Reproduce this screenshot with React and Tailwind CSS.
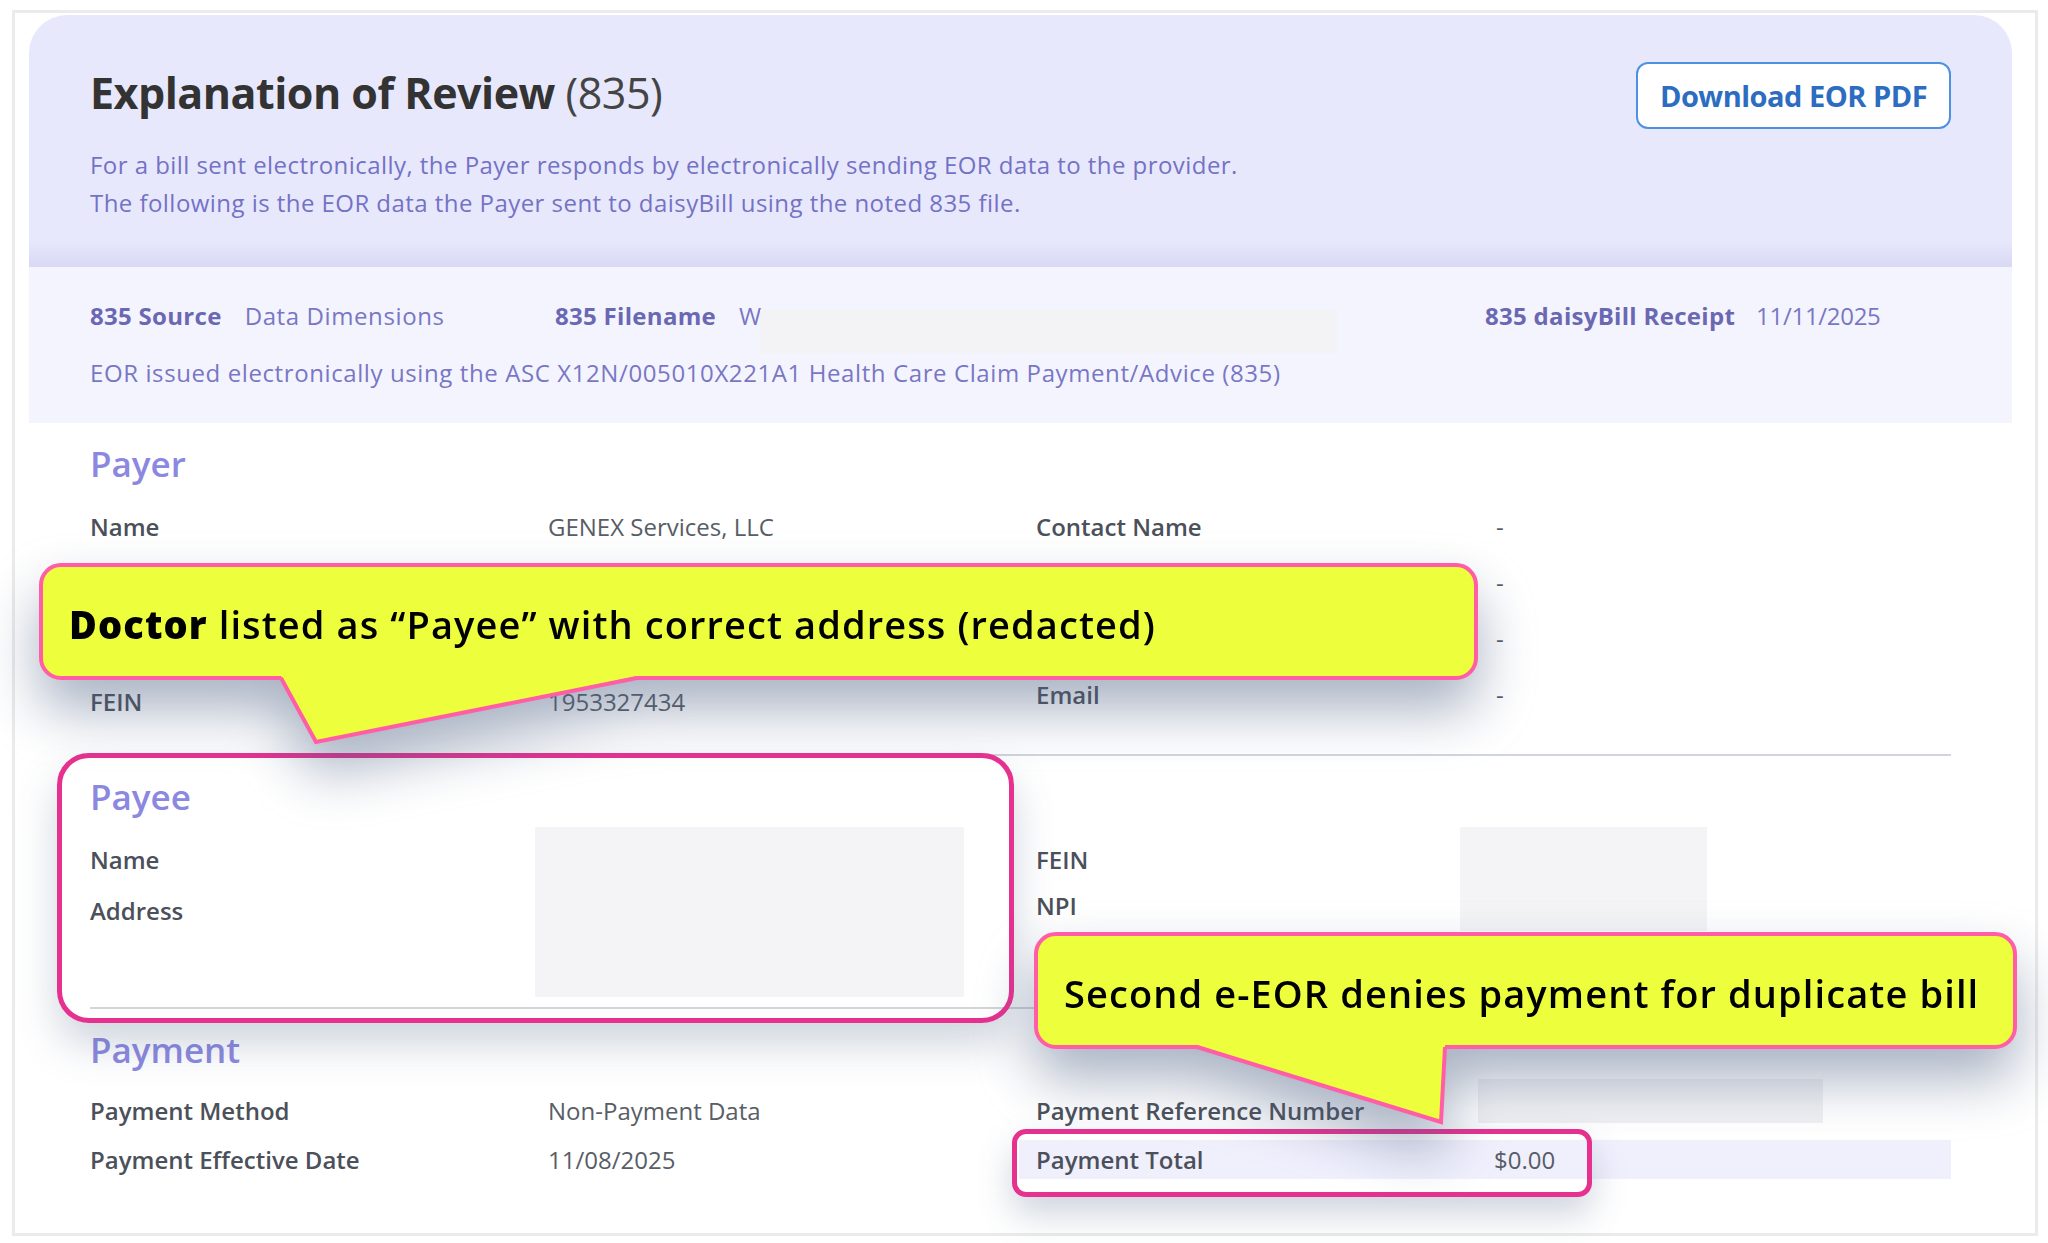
import React from 'react';

function Row({ cols, h, label, value, className = '' }) {
  return (
    <div className={`grid ${cols} ${h} ${className}`}>
      <span className="font-semibold text-[#4b505a]">{label}</span>
      <span className="text-[#585d66]">{value}</span>
    </div>
  );
}

function Callout({ pos, base, tail, children }) {
  // tail: [x1, x2, tipX, tipY] in local coords, measured from the box bottom
  const [x1, x2, tx, ty] = tail;
  return (
    <div className={`absolute ${pos} drop-shadow-[0_30px_28px_rgba(75,95,130,0.48)]`}>
      <div className="relative h-[117px] rounded-[22px] border-4 border-[#ff5ea6] bg-[#edff3c] flex items-center pl-[26px] pt-[6px] text-[38px] tracking-[1.1px] text-black">
        {children}
      </div>
      <svg className="absolute left-0 top-[113px]" width={base} height={ty + 6} viewBox={`0 0 ${base} ${ty + 6}`}>
        <polygon points={`${x1},0 ${tx},${ty} ${x2},0`} fill="#edff3c" />
        <polyline points={`${x1},2 ${tx},${ty} ${x2},2`} fill="none" stroke="#ff5ea6" strokeWidth="4" strokeLinejoin="miter" />
      </svg>
    </div>
  );
}

export default function App() {
  const L = 'grid-cols-[458px_1fr]';
  const R = 'grid-cols-[460px_1fr]';

  return (
    <div className="relative w-[2048px] h-[1243px] bg-white overflow-hidden font-['Open_Sans',Lato,sans-serif]">
      <div className="ml-[12px] mt-[10px] w-[2026px] h-[1226px] border-[3px] border-[#ebebeb] pl-[14px] pt-[2px]">
        <div className="w-[1983px]">
          {/* header */}
          <div className="h-[252px] rounded-t-[38px] bg-[linear-gradient(180deg,#e8e8fd_0%,#e8e8fd_89%,#d8d8f3_100%)] px-[61px] pt-[47px] flex justify-between items-start">
            <div className="pt-[5px]">
              <h1 className="text-[43px] leading-[52px] text-[#333333] tracking-[-0.5px]">
                <span className="font-bold">Explanation of Review</span>{' '}
                <span className="text-[#444444]">(835)</span>
              </h1>
              <p className="mt-[27px] text-[24px] leading-[38px] tracking-[0.45px] text-[#7472c4]">
                For a bill sent electronically, the Payer responds by electronically sending EOR data to the provider.
                <br />
                The following is the EOR data the Payer sent to daisyBill using the noted 835 file.
              </p>
            </div>
            <button className="w-[315px] h-[67px] rounded-[12px] border-2 border-[#4d91e3] bg-white text-[29px] font-bold text-[#2d6dc1] tracking-[-0.5px]">
              Download EOR PDF
            </button>
          </div>

          {/* 835 strip */}
          <div className="h-[156px] bg-[#f4f4fe] px-[61px] pt-[31px] text-[24px] leading-[36px] tracking-[0.6px] text-[#7977c4]">
            <div className="flex">
              <div className="w-[465px] flex gap-[23px]">
                <span className="font-bold text-[#6a68b3] tracking-[0.3px]">835 Source</span>
                <span>Data Dimensions</span>
              </div>
              <div className="w-[930px] flex gap-[23px]">
                <span className="font-bold text-[#6a68b3] tracking-[0.3px]">835 Filename</span>
                <span className="relative">
                  W
                  <span className="absolute left-[21px] top-[12px] w-[577px] h-[43px] bg-[#f3f3f5]" />
                </span>
              </div>
              <div className="flex gap-[21px]">
                <span className="font-bold text-[#6a68b3] tracking-[0.3px]">835 daisyBill Receipt</span>
                <span className="tracking-[-0.3px]">11/11/2025</span>
              </div>
            </div>
            <p className="mt-[21px]">
              EOR issued electronically using the ASC X12N/005010X221A1 Health Care Claim Payment/Advice (835)
            </p>
          </div>

          {/* body */}
          <div className="px-[61px] pt-[20px] text-[24px]">
            <h2 className="text-[35px] leading-[42px] font-semibold text-[#8b88e0]">Payer</h2>
            <div className="mt-[14px] grid grid-cols-[929px_932px] leading-[56px]">
              <div>
                <Row cols={L} h="h-[56px]" label="Name" value="GENEX Services, LLC" />
                <div className="h-[119px]" />
                <Row cols={L} h="h-[56px]" label="FEIN" value="1953327434" />
              </div>
              <div className="pl-[17px]">
                <Row cols={R} h="h-[56px]" label="Contact Name" value="-" />
                <Row cols={R} h="h-[56px]" label="" value="-" />
                <Row cols={R} h="h-[56px]" label="" value="-" />
                <Row cols={R} h="h-[56px]" label="Email" value="-" />
              </div>
            </div>
            <div className="mt-[24px] h-[2px] bg-[#d3d5dc]" />

            <h2 className="mt-[20px] text-[35px] leading-[42px] font-semibold text-[#8b88e0]">Payee</h2>
            <div className="grid grid-cols-[929px_932px] leading-[49px]">
              <div className="flex">
                <div className="w-[445px] pt-[17px] flex flex-col gap-[2px] font-semibold text-[#4b505a]">
                  <span>Name</span>
                  <span>Address</span>
                </div>
                <div className="mt-[9px] w-[429px] h-[170px] bg-[#f4f4f6]" />
              </div>
              <div className="flex pl-[17px]">
                <div className="w-[424px] pt-[17px] flex flex-col font-semibold text-[#4b505a]">
                  <span className="h-[46px]">FEIN</span>
                  <span>NPI</span>
                </div>
                <div className="mt-[9px] w-[247px] h-[104px] bg-[#f4f4f6]" />
              </div>
            </div>
            <div className="mt-[10px] h-[2px] bg-[#d3d5dc]" />

            <h2 className="mt-[20px] text-[35px] leading-[42px] font-semibold text-[#8b88e0]">Payment</h2>
            <div className="mt-[15px] grid grid-cols-[929px_932px] leading-[49px]">
              <div>
                <Row cols={L} h="h-[49px]" label="Payment Method" value="Non-Payment Data" />
                <Row cols={L} h="h-[49px]" label="Payment Effective Date" value="11/08/2025" />
              </div>
              <div>
                <div className="grid grid-cols-[460px_1fr] h-[49px] pl-[17px]">
                  <span className="font-semibold text-[#4b505a]">Payment Reference Number</span>
                  <span className="-ml-[18px] -mt-[7px] w-[345px] h-[44px] bg-[#f1f1f4]" />
                </div>
                <Row cols="grid-cols-[458px_1fr]" h="h-[39px]" label="Payment Total" value="$0.00" className="mt-[5px] pl-[17px] leading-[39px] bg-[#f0f0fd]" />
              </div>
            </div>
          </div>
        </div>
      </div>

      {/* annotations */}
      <div className="absolute left-[57px] top-[753px] w-[957px] h-[270px] rounded-[32px] border-[5px] border-[#e6318f] shadow-[0_22px_40px_rgba(75,95,130,0.26)]" />
      <div className="absolute left-[1012px] top-[1129px] w-[580px] h-[68px] rounded-[14px] border-[5px] border-[#e6318f] shadow-[0_18px_34px_rgba(75,95,130,0.26)]" />

      <Callout pos="left-[39px] top-[563px] w-[1439px]" base={1439} tail={[242, 598, 277, 66]}>
        <span>
          <span className="font-extrabold">Doctor</span>
          <span className="font-semibold"> listed as “Payee” with correct address (redacted)</span>
        </span>
      </Callout>
      <Callout pos="left-[1034px] top-[932px] w-[983px]" base={983} tail={[163, 411, 407, 77]}>
        <span className="font-semibold">Second e-EOR denies payment for duplicate bill</span>
      </Callout>
    </div>
  );
}
